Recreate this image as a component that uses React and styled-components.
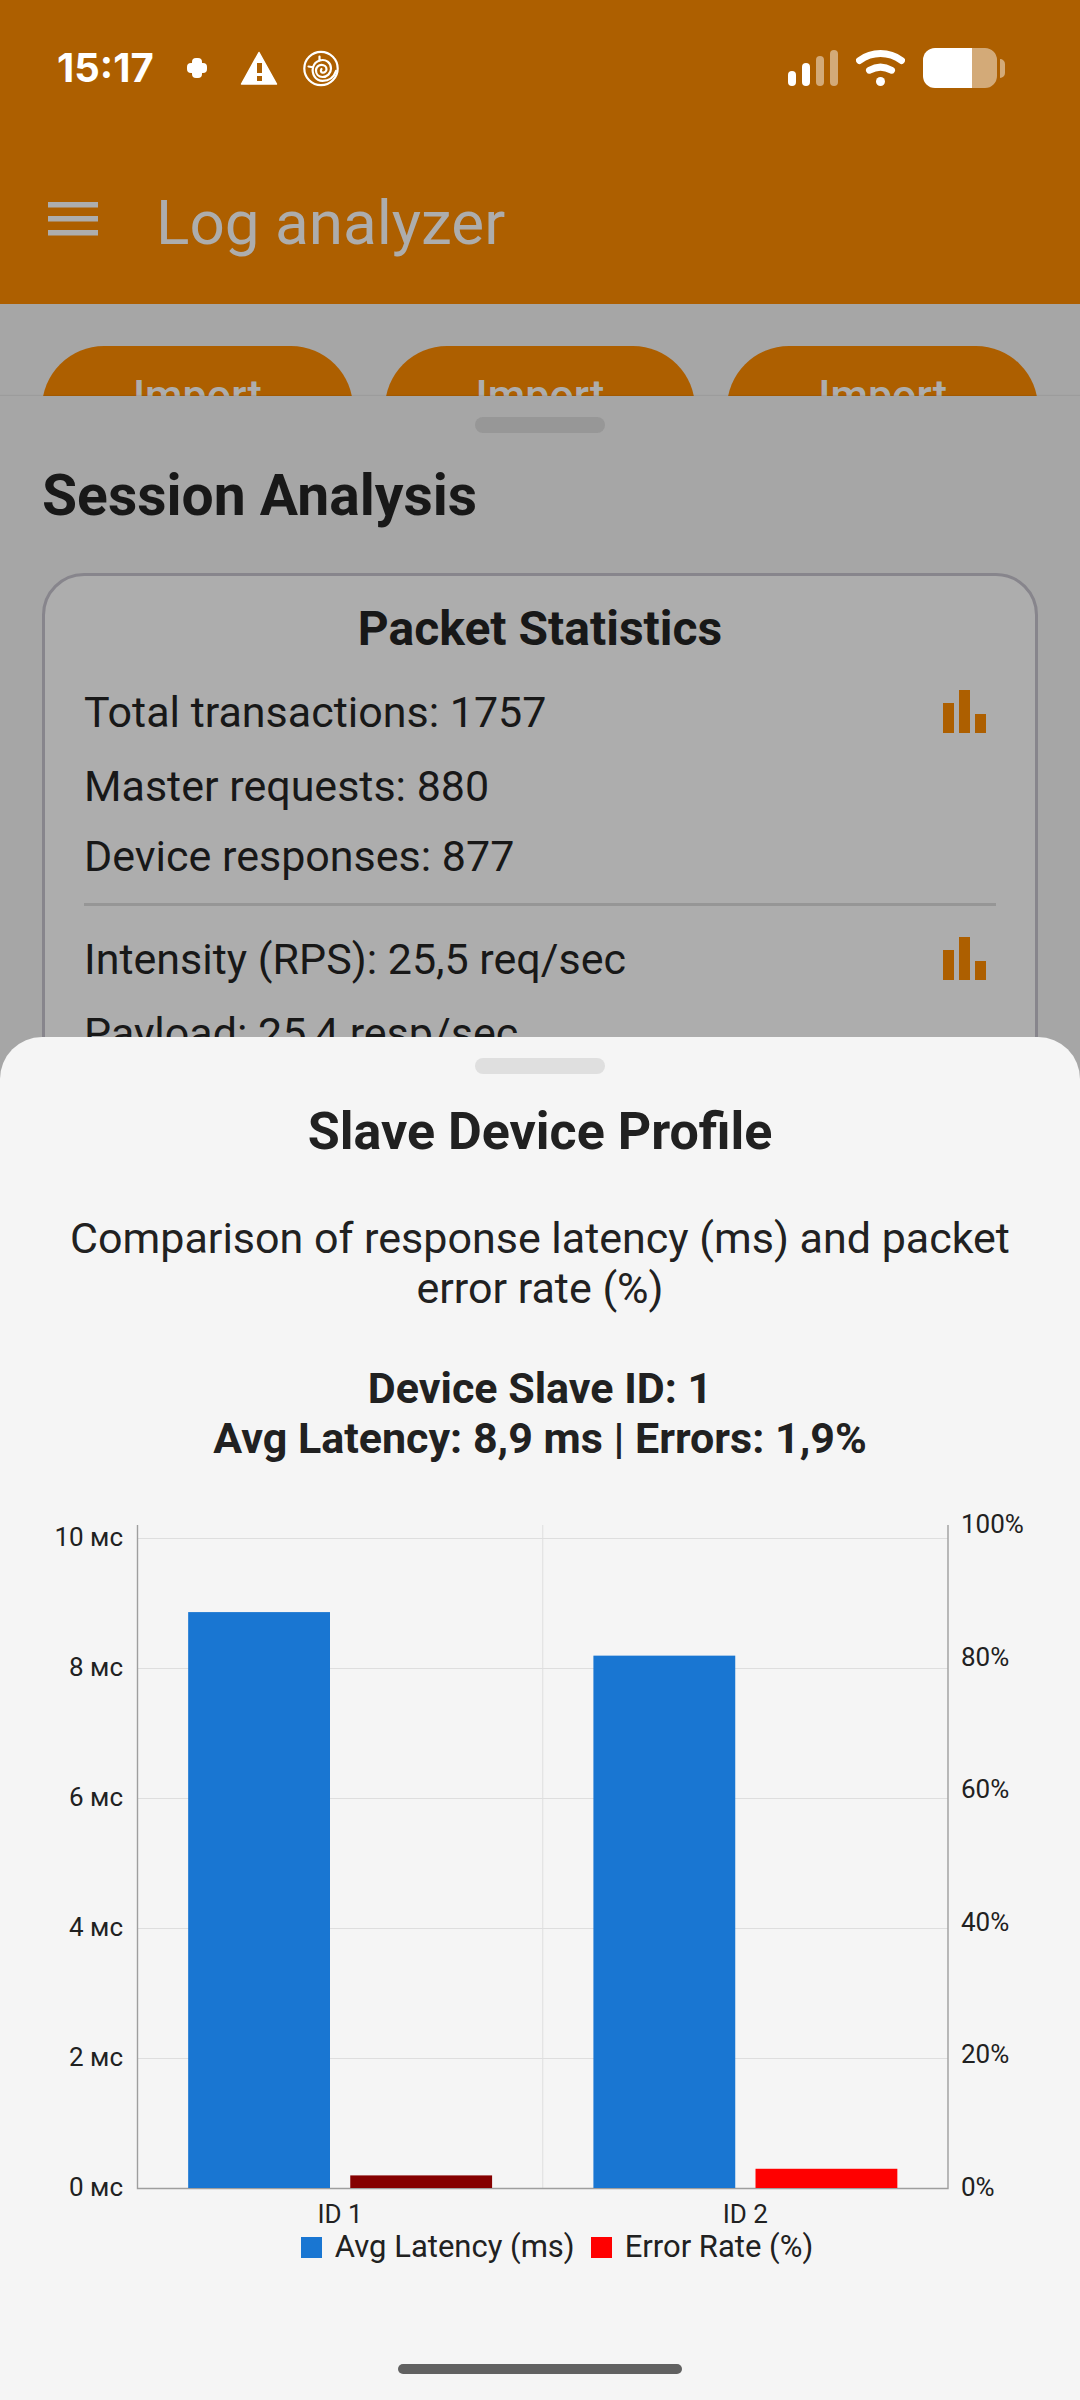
import React from "react";
import styled, { createGlobalStyle } from "styled-components";

const color = {
  bar: "#ad5f00",
  page: "#a6a6a6",
  card: "#adadad",
  onBar: "#adadad",
  ink: "#181818",
  sheet: "#f5f5f5",
  sheetInk: "#212121",
  latency: "#1976d2",
  error: "#ff0000",
  errorSelected: "#850000",
};

const GlobalStyle = createGlobalStyle`
  * { box-sizing: border-box; }
  body {
    margin: 0;
    background: ${color.page};
    font-family: Roboto, "Liberation Sans", sans-serif;
  }
  h1, h2, h3, p { margin: 0; }
`;

const Screen = styled.div`
  display: flex;
  flex-direction: column;
  min-height: 100vh;
  background: ${color.page};
`;

const Header = styled.header`
  background: ${color.bar};
`;

const StatusBar = styled.div`
  display: flex;
  align-items: center;
  justify-content: space-between;
  height: 136px;
  padding: 0 75px 0 57px;
  color: #fff;
`;

const StatusGroup = styled.div`
  display: flex;
  align-items: center;
  gap: ${(p) => p.$gap}px;
`;

const Clock = styled.time`
  font: 700 40px/50px Inter, Roboto, sans-serif;
`;

const AppBar = styled.div`
  display: flex;
  align-items: flex-start;
  gap: 50px;
  padding: 50px 40px 44px;
`;

const IconButton = styled.button`
  display: flex;
  align-items: center;
  justify-content: center;
  flex: none;
  width: ${(p) => p.$size}px;
  height: ${(p) => p.$size}px;
  padding: 0;
  border: 0;
  background: none;
  color: ${(p) => p.$color};
`;

const AppTitle = styled.h1`
  font-size: 62px;
  font-weight: 400;
  line-height: 74px;
  color: ${color.onBar};
`;

const ImportStrip = styled.div`
  display: grid;
  grid-template-columns: repeat(3, 1fr);
  gap: 32px;
  padding: 42px 42px 38px;
`;

const ImportButton = styled.button`
  display: flex;
  justify-content: center;
  align-items: flex-start;
  min-height: 144px;
  padding: 24px;
  border: 0;
  border-radius: 62px;
  background: ${color.bar};
  color: ${color.onBar};
  font: 500 43px/50px Roboto, sans-serif;
`;

const Handle = styled.div`
  width: 130px;
  height: 16px;
  margin: 0 auto;
  border-radius: 8px;
  background: ${(p) => p.$color};
`;

const SessionSheet = styled.section`
  position: relative;
  flex: 1 1 0;
  margin-top: -132px;
  padding: 21px 42px 0;
  overflow: hidden;
  background: ${color.page};
  box-shadow: 0 -1px 1px rgba(0, 0, 0, 0.06);
  color: ${color.ink};
`;

const SessionTitle = styled.h2`
  margin: 30px 0 44px;
  font-size: 57px;
  font-weight: 700;
  line-height: 66px;
`;

const Card = styled.article`
  padding: 21px 39px 42px;
  border: 3px solid #87858c;
  border-radius: 42px;
  background: ${color.card};
`;

const CardTitle = styled.h3`
  margin-bottom: 11px;
  font-size: 48px;
  font-weight: 700;
  line-height: 64px;
  text-align: center;
`;

const StatRow = styled.div`
  display: flex;
  align-items: center;
  justify-content: space-between;
  min-height: 70px;
  padding: 8px 0;
  font-size: 43px;
  line-height: 50px;
`;

const Divider = styled.hr`
  height: 3px;
  margin: 12px 0 13px;
  border: 0;
  background: #969696;
`;

const ProfileSheet = styled.section`
  position: relative;
  margin-top: -42px;
  padding-top: 21px;
  border-radius: 42px 42px 0 0;
  background: ${color.sheet};
  color: ${color.sheetInk};
`;

const ProfileText = styled.div`
  padding: 0 42px;
  text-align: center;
  font-size: 43px;
  line-height: 50px;
`;

const ProfileTitle = styled.h2`
  margin: 27px 0 50px;
  font-size: 52px;
  font-weight: 700;
  line-height: 62px;
`;

const Selection = styled.p`
  margin: 50px 0 42px;
  font-weight: 700;
`;

const ChartSvg = styled.svg`
  display: block;
  width: 100%;
  height: auto;
  font-size: 26px;
`;

const Legend = styled.ul`
  display: flex;
  justify-content: center;
  gap: 16px;
  margin: 0;
  padding: 0 0 0 34px;
  list-style: none;
  font-size: 31px;
  line-height: 38px;
`;

const LegendItem = styled.li`
  display: flex;
  align-items: center;
  gap: 13px;
  &::before {
    content: "";
    width: 21px;
    height: 21px;
    background: ${(p) => p.$color};
  }
`;

const HomeBar = styled.div`
  width: 284px;
  height: 10px;
  margin: 98px auto 0;
  border-radius: 5px;
  background: #616161;
`;

const HomeArea = styled.footer`
  padding-bottom: 26px;
`;

const PlusIcon = () => (
  <svg width="38" height="38" viewBox="0 0 38 38" fill="currentColor" aria-hidden="true">
    <rect x="14" y="9" width="10" height="20" rx="4" />
    <rect x="9" y="14" width="20" height="10" rx="4" />
  </svg>
);

const WarningIcon = () => (
  <svg width="38" height="38" viewBox="0 0 38 38" aria-hidden="true">
    <path d="M19 3.5 36.5 35H1.5Z" fill="currentColor" stroke="currentColor" strokeWidth="1.5" strokeLinejoin="round" />
    <path d="M17 14h5v10h-5zM17 27h5v5h-5z" fill={color.bar} />
  </svg>
);

const SwirlIcon = () => (
  <svg width="38" height="38" viewBox="0 0 38 38" fill="none" stroke="currentColor" strokeWidth="2.2" strokeLinecap="round" aria-hidden="true">
    <circle cx="19" cy="19.5" r="16.7" />
    <path d="M17.500 7.500V11.500C24 9.500 29 14 29 19.500C29 24.500 25 28 20.500 28C16.500 28 14 25 14 21.500C14 18 16.800 15.800 19.500 15.800C22.300 15.800 24.500 17.800 24.500 20.200C24.500 22.300 22.500 23.800 20.700 23.700C18.800 23.500 18.300 21.500 19.500 20" />
    <path d="M17.500 11.500C14.500 12.500 12 14.800 11 18.300L6.500 17.500M11 18.300C9.500 25 13.500 31.800 20.500 31.800C27 31.800 32 28 34 22" />
  </svg>
);

const SignalIcon = () => (
  <svg width="50" height="40" viewBox="0 0 50 40" fill="currentColor" aria-hidden="true">
    <rect x="0" y="23" width="8" height="15" rx="4" />
    <rect x="14" y="15" width="8" height="23" rx="4" />
    <rect x="28" y="8" width="8" height="30" rx="4" opacity="0.47" />
    <rect x="42" y="2" width="8" height="36" rx="4" opacity="0.47" />
  </svg>
);

const WifiIcon = () => (
  <svg width="49" height="40" viewBox="0 0 49 40" fill="none" stroke="currentColor" strokeWidth="7" strokeLinecap="round" aria-hidden="true">
    <path d="M3.500 12.500C16 3.300 33 3.300 45.500 12.500M13.500 22.200C20.500 18.300 28.500 18.300 35.500 22.200" />
    <circle cx="24.500" cy="33.500" r="4.500" fill="currentColor" stroke="none" />
  </svg>
);

const BatteryIcon = () => (
  <svg width="82" height="40" viewBox="0 0 82 40" fill="currentColor" aria-hidden="true">
    <path d="M12 0H49V40H12A12 12 0 0 1 0 28V12A12 12 0 0 1 12 0Z" />
    <path d="M49 0H62A12 12 0 0 1 74 12V28A12 12 0 0 1 62 40H49ZM77 11a5 5 0 0 1 5 5v9a5 5 0 0 1-5 5Z" opacity="0.47" />
  </svg>
);

const MenuIcon = () => (
  <svg width="50" height="34" viewBox="0 0 50 34" fill="currentColor" aria-hidden="true">
    <path d="M0 0h50v5.600H0zM0 14h50v5.600H0zM0 28h50v5.600H0z" />
  </svg>
);

const BarsIcon = () => (
  <svg width="43" height="43" viewBox="0 0 43 43" fill="currentColor" aria-hidden="true">
    <path d="M0 13h11v30H0zM16 0h11v43H16zM32 24h11v19H32z" />
  </svg>
);

const groups = [
  {
    rows: [
      { text: "Total transactions: 1757", chart: true },
      { text: "Master requests: 880" },
      { text: "Device responses: 877" },
    ],
  },
  {
    rows: [
      { text: "Intensity (RPS): 25,5 req/sec", chart: true },
      { text: "Payload: 25,4 resp/sec" },
    ],
  },
];

const devices = [
  { name: "ID 1", latency: 8.86, error: 1.9, selected: true },
  { name: "ID 2", latency: 8.19, error: 2.9 },
];

const plot = { left: 137.5, right: 948, top: 20, bottom: 683, maxLatency: 10.2 };

function Chart() {
  const height = plot.bottom - plot.top;
  const slot = (plot.right - plot.left) / devices.length;
  const latencyY = (v) => plot.bottom - (v / plot.maxLatency) * height;
  const percentY = (v) => plot.bottom - (v / 100) * height;
  return (
    <ChartSvg viewBox="0 0 1080 723" role="img" aria-label="Latency and error rate by device">
      <g stroke="#dedede">
        {[2, 4, 6, 8, 10].map((v) => (
          <line key={v} x1={plot.left} x2={plot.right} y1={latencyY(v) + 0.5} y2={latencyY(v) + 0.5} />
        ))}
        <line x1={plot.left + slot} x2={plot.left + slot} y1={plot.top} y2={plot.bottom} />
      </g>
      <path
        d={`M${plot.left} ${plot.top}V${plot.bottom + 0.5}H${plot.right}V${plot.top}`}
        fill="none"
        stroke="#9e9e9e"
        strokeWidth="1.400"
      />
      {devices.map((d, i) => {
        const x = plot.left + slot * i;
        return (
          <g key={d.name}>
            <rect x={x + slot * 0.125} y={latencyY(d.latency)} width={slot * 0.35} height={plot.bottom - latencyY(d.latency)} fill={color.latency} />
            <rect x={x + slot * 0.525} y={percentY(d.error)} width={slot * 0.35} height={plot.bottom - percentY(d.error)} fill={d.selected ? color.errorSelected : color.error} />
            <text x={x + slot / 2} y="718" textAnchor="middle" fill={color.sheetInk}>{d.name}</text>
          </g>
        );
      })}
      <g fill={color.sheetInk}>
        {[0, 2, 4, 6, 8, 10].map((v) => (
          <text key={v} x="123" y={latencyY(v) + 8} textAnchor="end">{`${v} мс`}</text>
        ))}
        {[0, 20, 40, 60, 80, 100].map((v) => (
          <text key={v} x="961" y={percentY(v) + 8}>{`${v}%`}</text>
        ))}
      </g>
    </ChartSvg>
  );
}

export default function App() {
  return (
    <Screen>
      <GlobalStyle />
      <Header>
        <StatusBar>
          <StatusGroup $gap={24}>
            <Clock>15:17</Clock>
            <PlusIcon />
            <WarningIcon />
            <SwirlIcon />
          </StatusGroup>
          <StatusGroup $gap={18}>
            <SignalIcon />
            <WifiIcon />
            <BatteryIcon />
          </StatusGroup>
        </StatusBar>
        <AppBar>
          <IconButton $size={66} $color={color.onBar} aria-label="Menu">
            <MenuIcon />
          </IconButton>
          <AppTitle>Log analyzer</AppTitle>
        </AppBar>
      </Header>
      <ImportStrip>
        {[0, 1, 2].map((n) => (
          <ImportButton key={n}>Import</ImportButton>
        ))}
      </ImportStrip>
      <SessionSheet>
        <Handle $color="#979797" />
        <SessionTitle>Session Analysis</SessionTitle>
        <Card>
          <CardTitle>Packet Statistics</CardTitle>
          {groups.map((group, i) => (
            <React.Fragment key={i}>
              {i > 0 && <Divider />}
              {group.rows.map((row) => (
                <StatRow key={row.text}>
                  <span>{row.text}</span>
                  {row.chart && (
                    <IconButton $size={63} $color={color.bar} aria-label={`Chart: ${row.text}`}>
                      <BarsIcon />
                    </IconButton>
                  )}
                </StatRow>
              ))}
            </React.Fragment>
          ))}
        </Card>
      </SessionSheet>
      <ProfileSheet>
        <Handle $color="#dfdfdf" />
        <ProfileText>
          <ProfileTitle>Slave Device Profile</ProfileTitle>
          <p>Comparison of response latency (ms) and packet error rate (%)</p>
          <Selection>
            Device Slave ID: 1
            <br />
            Avg Latency: 8,9 ms | Errors: 1,9%
          </Selection>
        </ProfileText>
        <Chart />
        <Legend>
          <LegendItem $color={color.latency}>Avg Latency (ms)</LegendItem>
          <LegendItem $color={color.error}>Error Rate (%)</LegendItem>
        </Legend>
        <HomeArea>
          <HomeBar />
        </HomeArea>
      </ProfileSheet>
    </Screen>
  );
}
